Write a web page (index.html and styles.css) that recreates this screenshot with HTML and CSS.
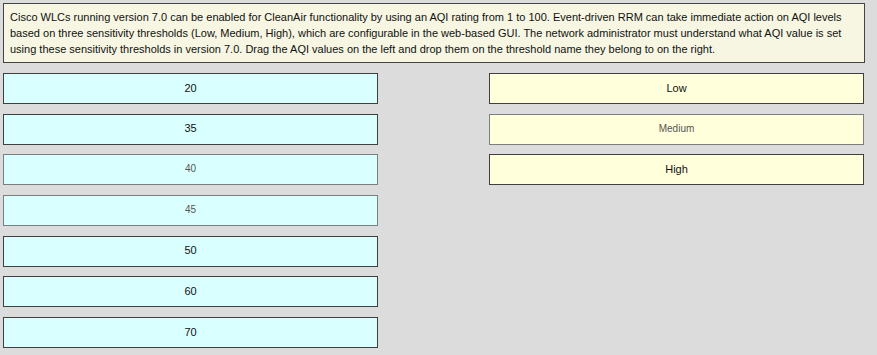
FILE: index.html
```html
<!DOCTYPE html>
<html>
<head>
    <title>CleanAir AQI Thresholds</title>
    <meta charset="UTF-8">
    <link rel="stylesheet" href="styles.css">
</head>
<body>
    <div class="question">
        Cisco WLCs running version 7.0 can be enabled for CleanAir functionality by using an AQI rating from 1 to 100. Event-driven RRM can take immediate action on AQI levels<br>
        based on three sensitivity thresholds (Low, Medium, High), which are configurable in the web-based GUI. The network administrator must understand what AQI value is set<br>
        using these sensitivity thresholds in version 7.0. Drag the AQI values on the left and drop them on the threshold name they belong to on the right.
    </div>

    <div class="board">
        <div class="column">
            <div class="item value">20</div>
            <div class="item value">35</div>
            <div class="item value faded">40</div>
            <div class="item value faded">45</div>
            <div class="item value">50</div>
            <div class="item value">60</div>
            <div class="item value">70</div>
        </div>
        <div class="column">
            <div class="item target">Low</div>
            <div class="item target faded">Medium</div>
            <div class="item target">High</div>
        </div>
    </div>
</body>
</html>
```

FILE: styles.css
```css
body {
    font-family: Arial, "Liberation Sans", sans-serif;
    font-size: 11px;
    color: #111111;
    background-color: #dcdcdc;
    margin: 0;
    padding: 3px;
}
.question {
    width: 849px;
    background-color: #f6f6e2;
    border: 1px solid #444444;
    padding: 5px 5px 5px 6px;
    line-height: 16px;
}
.board {
    display: flex;
    gap: 111px;
    margin-top: 10px;
}
.column {
    width: 375px;
    display: flex;
    flex-direction: column;
    gap: 9.7px;
}
.item {
    height: 31px;
    box-sizing: border-box;
    border: 1px solid #3f3f3f;
    padding-bottom: 2px;
    display: flex;
    align-items: center;
    justify-content: center;
}
.value {
    background-color: #d9ffff;
}
.target {
    background-color: #ffffdc;
}
.faded {
    color: #555555;
    border-color: #7a8080;
    font-size: 10px;
}
```
